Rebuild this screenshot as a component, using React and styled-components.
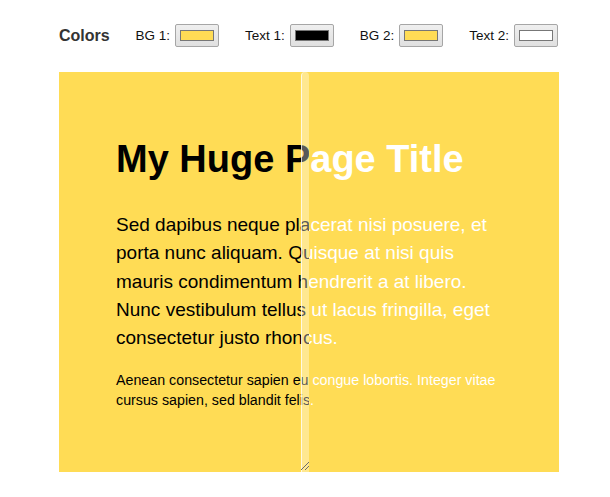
import React from "react";
import styled, { createGlobalStyle } from "styled-components";

const GlobalStyle = createGlobalStyle`
  html, body {
    margin: 0;
    padding: 0;
    background: #fff;
  }
  body {
    font-family: "Liberation Sans", Arial, sans-serif;
  }
`;

const colors = [
  { label: "BG 1:", value: "#ffdc55" },
  { label: "Text 1:", value: "#000000" },
  { label: "BG 2:", value: "#ffdc55" },
  { label: "Text 2:", value: "#ffffff" },
];

function Content() {
  return (
    <>
      <Title>My Huge Page Title</Title>
      <Lead>
        Sed dapibus neque placerat nisi posuere, et porta nunc aliquam. Quisque
        at nisi quis mauris condimentum hendrerit a at libero. Nunc vestibulum
        tellus ut lacus fringilla, eget consectetur justo rhoncus.
      </Lead>
      <Small>
        Aenean consectetur sapien eu congue lobortis. Integer vitae cursus
        sapien, sed blandit felis.
      </Small>
    </>
  );
}

function App() {
  return (
    <Page>
      <GlobalStyle />
      <Toolbar>
        <Heading>Colors</Heading>
        {colors.map((c) => (
          <Field key={c.label}>
            {c.label}
            <Swatch type="button">
              <SwatchFill $color={c.value} />
            </Swatch>
          </Field>
        ))}
      </Toolbar>
      <Stage>
        <Pane $text="#ffffff">
          <Content />
        </Pane>
        <Overlay>
          <Pane $text="#000000">
            <Content />
          </Pane>
          <Handle>
            <Grip viewBox="0 0 10 10" width="10" height="10">
              <line x1="1" y1="9" x2="9" y2="1" stroke="#6b6b6b" strokeWidth="1" />
              <line x1="5" y1="9" x2="9" y2="5" stroke="#6b6b6b" strokeWidth="1" />
            </Grip>
          </Handle>
        </Overlay>
      </Stage>
    </Page>
  );
}

export default App;

const Page = styled.div`
  width: 500px;
  padding: 24px 0 25px 59px;
`;

const Toolbar = styled.div`
  display: flex;
  align-items: center;
  justify-content: space-between;
  height: 23px;
  margin-bottom: 25px;
  padding-right: 1px;
`;

const Heading = styled.h2`
  margin: 0;
  font-size: 16px;
  font-weight: bold;
  color: #333;
`;

const Field = styled.label`
  display: flex;
  align-items: center;
  gap: 5px;
  font-size: 13.5px;
  color: #111;
`;

const Swatch = styled.button`
  width: 44px;
  height: 23px;
  padding: 0;
  display: flex;
  align-items: center;
  justify-content: center;
  border: 1px solid #a6a6a6;
  border-radius: 2px;
  background: linear-gradient(#efefef, #e0e0e0);
`;

const SwatchFill = styled.span`
  display: block;
  width: 32px;
  height: 9px;
  border: 1px solid #777;
  background: ${(p) => p.$color};
`;

const Stage = styled.div`
  position: relative;
  width: 500px;
  height: 400px;
  background: #ffdc55;
  overflow: hidden;
`;

const Pane = styled.div`
  width: 500px;
  height: 400px;
  box-sizing: border-box;
  padding: 65px 57px 0;
  font-size: 19px;
  color: ${(p) => p.$text};
  background: #ffdc55;
`;

const Overlay = styled.div`
  position: absolute;
  top: 0;
  left: 0;
  width: 250px;
  height: 400px;
  overflow: hidden;
`;

const Handle = styled.div`
  position: absolute;
  top: 0;
  left: 242px;
  width: 7px;
  height: 400px;
  border-left: 1px solid rgba(255, 255, 255, 0.75);
  border-radius: 4px 4px 0 0;
  background: rgba(255, 255, 255, 0.35);
`;

const Grip = styled.svg`
  position: absolute;
  right: -1px;
  bottom: 1px;
`;

const Title = styled.h1`
  margin: 0;
  font-size: 2em;
  line-height: 44px;
  font-weight: bold;
`;

const Lead = styled.p`
  margin: 30px 0 0;
  line-height: 28.3px;
`;

const Small = styled.p`
  margin: 19px 0 0;
  font-size: 0.75em;
  line-height: 19.5px;
`;
